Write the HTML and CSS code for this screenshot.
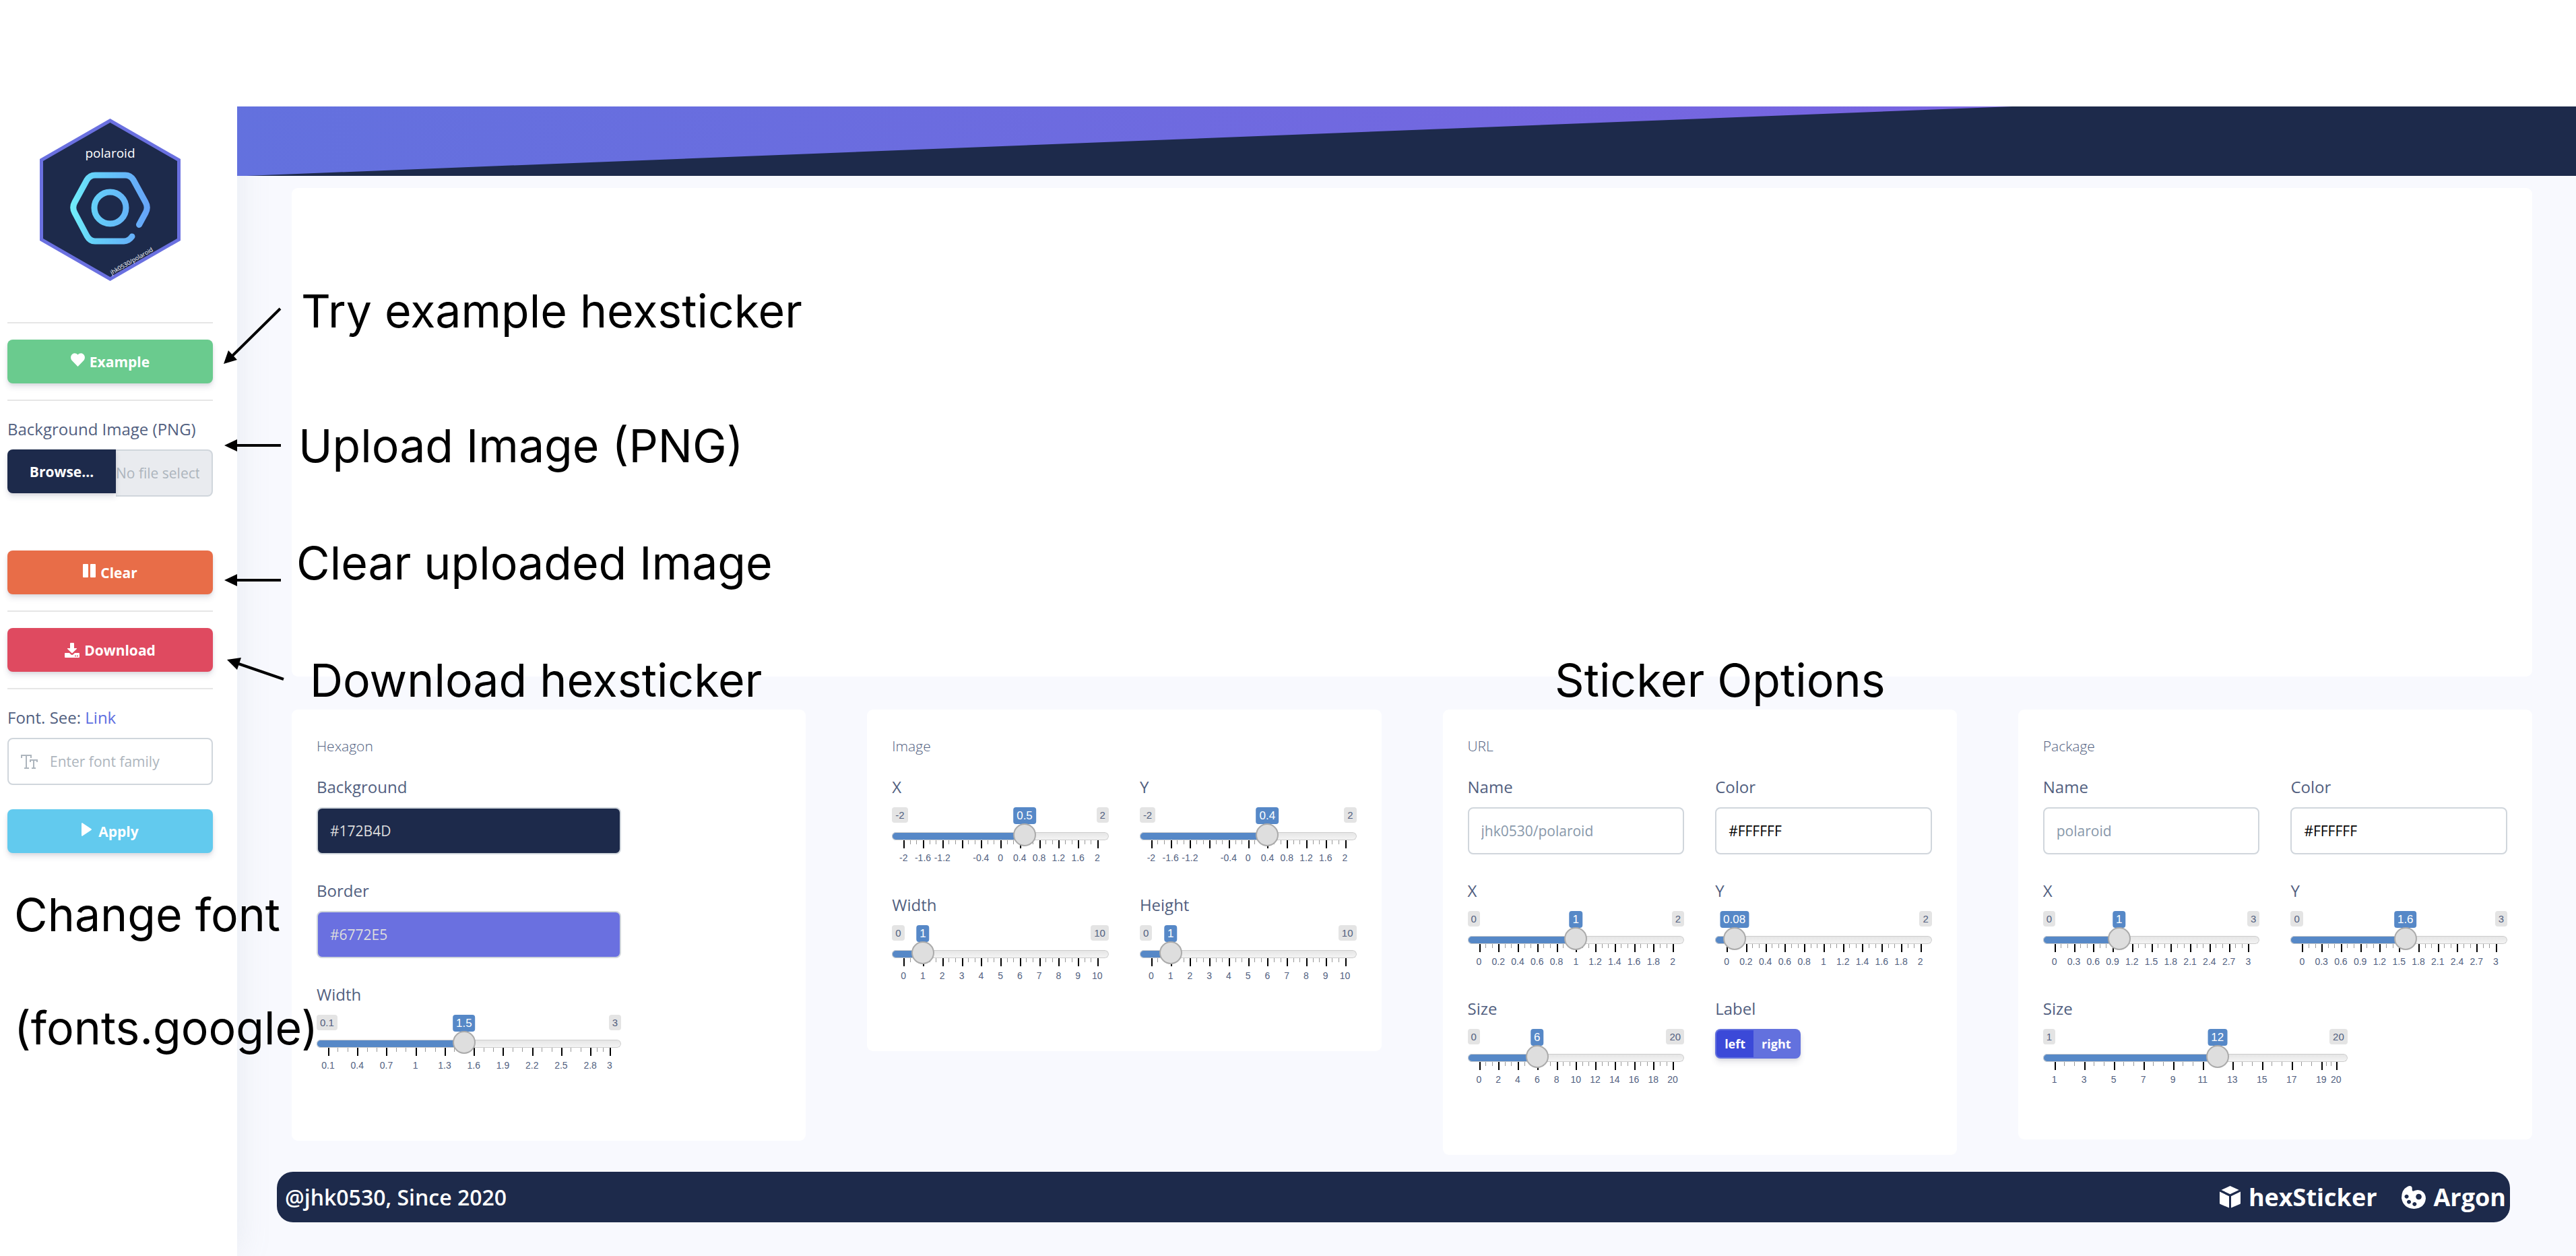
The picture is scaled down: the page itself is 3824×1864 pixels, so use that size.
FILE: index.html
```html
<!DOCTYPE html>
<html lang="en">
<head>
<meta charset="utf-8">
<meta name="viewport" content="width=device-width, initial-scale=1">
<title>polaroid – hexSticker builder</title>
<link rel="stylesheet" href="styles.css">
</head>
<body>
<div class="app">
  <aside class="sidebar">
    <svg class="logo" viewBox="0 0 209 241" role="img" aria-label="polaroid">
      <defs>
        <linearGradient id="ring" gradientUnits="userSpaceOnUse" x1="45" y1="0" x2="164" y2="0">
          <stop offset="0" stop-color="#72f0fb"/><stop offset=".3" stop-color="#64cff8"/><stop offset="1" stop-color="#66a3f9"/>
        </linearGradient>
      </defs>
      <path d="M104.500 3L206.500 61.500V179.500L104.500 238L2.500 179.500V61.500Z" fill="#1d2a4b" stroke="#6a70e0" stroke-width="5"/>
      <g fill="none" stroke="url(#ring)" stroke-width="9" stroke-linecap="round" stroke-linejoin="round">
        <path d="M147.500 157.500L157 140Q161.500 132 157 124L139 91Q134.500 84 127 84H82Q74.500 84 70 91L52 124Q47.500 132 52 140L70 174Q74.500 182 82 182H125Q132 182 137 175"/>
        <circle cx="104.500" cy="132.500" r="23.500"/>
      </g>
      <text x="104.500" y="58" text-anchor="middle" class="logo-name">polaroid</text>
      <text transform="translate(107 232) rotate(-30)" class="logo-url">jhk0530/polaroid</text>
    </svg>
    <hr>
    <button class="btn btn-green" type="button">
      <svg class="icon" viewBox="0 0 21 20"><path d="M10.500 20L2 11.200C-.8 8.300-.4 3.600 2.500 1.400C5.100-.6 8.300.1 10.500 2.500C12.700.1 15.900-.6 18.500 1.400C21.400 3.600 21.800 8.300 19 11.200Z"/></svg>
      Example</button>
    <hr>
    <label class="field-label" for="upload">Background Image (PNG)</label>
    <div class="file">
      <label class="btn browse">Browse...<input class="hidden-input" id="upload" type="file" accept="image/png"></label>
      <input class="file-name" type="text" placeholder="No file selected" aria-label="Chosen file" readonly>
    </div>
    <button class="btn btn-orange" type="button">
      <svg class="icon" viewBox="0 0 19 20"><rect width="8" height="20" rx="1"/><rect x="11" width="8" height="20" rx="1"/></svg>
      Clear</button>
    <hr>
    <button class="btn btn-red" type="button">
      <svg class="icon icon-low" viewBox="0 0 22 22"><path d="M9 0h4q1 0 1 1v7h3.500q1.200 0 .4 1l-6.200 6q-.7.6-1.400 0l-6.200-6q-.8-1 .4-1H8V1q0-1 1-1zM1 15h6l2.300 2.200q1.700 1.500 3.400 0L15 15h6q1 0 1 1v5q0 1-1 1H1q-1 0-1-1v-5q0-1 1-1z"/><circle cx="16" cy="19.500" r="1" fill="#df4a60"/><circle cx="19" cy="19.500" r="1" fill="#df4a60"/></svg>
      Download</button>
    <hr>
    <label class="field-label" for="font">Font. See: <a href="#fonts">Link</a></label>
    <div class="font-box">
      <svg class="font-icon" viewBox="0 0 25 21" aria-hidden="true"><path d="M1 5V1h14v4M8 1v19M5 20h7M14 11V8h10v3M19 8v12M16 20h6"/></svg>
      <input id="font" type="text" placeholder="Enter font family">
    </div>
    <button class="btn btn-cyan" type="button">
      <svg class="icon icon-play" viewBox="0 0 15 20"><path d="M0 1.200Q.2-.4 1.600.4L14.300 9Q15.600 10 14.300 11L1.600 19.600Q.2 20.400 0 18.800Z"/></svg>
      Apply</button>
  </aside>

  <main class="main">
    <svg class="banner" viewBox="0 0 1000 100" preserveAspectRatio="none" aria-hidden="true">
      <path d="M4 100L759 0H1000V100Z"/>
    </svg>
    <section class="preview" aria-label="Preview"></section>

    <div class="cards">
      <section class="card">
        <h2>Hexagon</h2>
        <div class="field narrow"><label class="field-label" for="hex-bg">Background</label><input class="text navy" id="hex-bg" type="text" value="#172B4D"></div>
        <div class="field narrow"><label class="field-label" for="hex-border">Border</label><input class="text violet" id="hex-border" type="text" value="#6772E5"></div>
        <div class="field narrow"><label class="field-label" for="hex-width">Width</label><input type="range" id="hex-width" min="0.1" max="3" step="0.1" value="1.5" data-ticks="0.1 0.4 0.7 1 1.3 1.6 1.9 2.2 2.5 2.8 3"></div>
      </section>

      <section class="card">
        <h2>Image</h2>
        <div class="pair">
          <div class="field"><label class="field-label" for="img-x">X</label><input type="range" id="img-x" min="-2" max="2" step="0.1" value="0.5" data-ticks="-2 -1.6 -1.2 -0.8 -0.4 0 0.4 0.8 1.2 1.6 2" data-mute="-0.8"></div>
          <div class="field"><label class="field-label" for="img-y">Y</label><input type="range" id="img-y" min="-2" max="2" step="0.1" value="0.4" data-ticks="-2 -1.6 -1.2 -0.8 -0.4 0 0.4 0.8 1.2 1.6 2" data-mute="-0.8"></div>
          <div class="field"><label class="field-label" for="img-w">Width</label><input type="range" id="img-w" min="0" max="10" step="0.1" value="1" data-ticks="0 1 2 3 4 5 6 7 8 9 10"></div>
          <div class="field"><label class="field-label" for="img-h">Height</label><input type="range" id="img-h" min="0" max="10" step="0.1" value="1" data-ticks="0 1 2 3 4 5 6 7 8 9 10"></div>
        </div>
      </section>

      <section class="card">
        <h2>URL</h2>
        <div class="pair">
          <div class="field"><label class="field-label" for="url-name">Name</label><input class="text" id="url-name" type="text" value="jhk0530/polaroid"></div>
          <div class="field"><label class="field-label" for="url-color">Color</label><input class="text black" id="url-color" type="text" value="#FFFFFF"></div>
          <div class="field"><label class="field-label" for="url-x">X</label><input type="range" id="url-x" min="0" max="2" step="0.01" value="1" data-ticks="0 0.2 0.4 0.6 0.8 1 1.2 1.4 1.6 1.8 2"></div>
          <div class="field"><label class="field-label" for="url-y">Y</label><input type="range" id="url-y" min="0" max="2" step="0.01" value="0.08" data-ticks="0 0.2 0.4 0.6 0.8 1 1.2 1.4 1.6 1.8 2"></div>
          <div class="field"><label class="field-label" for="url-size">Size</label><input type="range" id="url-size" min="0" max="20" step="1" value="6" data-ticks="0 2 4 6 8 10 12 14 16 18 20"></div>
          <div class="field" role="radiogroup" aria-labelledby="url-label">
            <span class="field-label" id="url-label">Label</span>
            <div class="toggle">
              <label><input class="hidden-input" type="radio" name="side" checked><span>left</span></label>
              <label><input class="hidden-input" type="radio" name="side"><span>right</span></label>
            </div>
          </div>
        </div>
      </section>

      <section class="card card-short">
        <h2>Package</h2>
        <div class="pair">
          <div class="field"><label class="field-label" for="pkg-name">Name</label><input class="text" id="pkg-name" type="text" value="polaroid"></div>
          <div class="field"><label class="field-label" for="pkg-color">Color</label><input class="text black" id="pkg-color" type="text" value="#FFFFFF"></div>
          <div class="field"><label class="field-label" for="pkg-x">X</label><input type="range" id="pkg-x" min="0" max="3" step="0.05" value="1" data-ticks="0 0.3 0.6 0.9 1.2 1.5 1.8 2.1 2.4 2.7 3"></div>
          <div class="field"><label class="field-label" for="pkg-y">Y</label><input type="range" id="pkg-y" min="0" max="3" step="0.05" value="1.6" data-ticks="0 0.3 0.6 0.9 1.2 1.5 1.8 2.1 2.4 2.7 3"></div>
        </div>
        <div class="field narrow"><label class="field-label" for="pkg-size">Size</label><input type="range" id="pkg-size" min="1" max="20" step="1" value="12" data-ticks="1 3 5 7 9 11 13 15 17 19 20"></div>
      </section>
    </div>

    <footer class="footer">
      <span class="author">@jhk0530, Since 2020</span>
      <nav class="links">
        <a href="#hexsticker"><svg viewBox="0 0 31 33" width="31" height="33"><path d="M15.500 0L28.700 6L15.500 12.200L2.500 6ZM0 8.500L14 15.300V32.500L1 27Q0 26.500 0 25.500ZM31 8.500L17 15.300V32.500L30 27Q31 26.500 31 25.500Z"/></svg>hexSticker</a>
        <a href="#argon"><svg viewBox="0 0 36 34" width="36" height="34"><path fill-rule="evenodd" d="M8.500 1.200Q14-1.500 15.700 2.500V5Q15.500 8.200 18 7.500Q24 4.500 30 7.500Q36 11.500 36 18.500Q34.500 33 18.500 34Q2.500 33 0 18Q0 5.500 8.500 1.200ZM7.500 12.700a3 3 0 1 0 .1 0ZM25.500 11.700a4.300 4.300 0 1 0 .1 0ZM11 20.700a3 3 0 1 0 .1 0ZM19.300 24a3 3 0 1 0 .1 0Z"/></svg>Argon</a>
      </nav>
    </footer>
  </main>
</div>

<div class="notes">
  <svg class="arrows" width="440" height="1020" viewBox="0 0 440 1020" aria-hidden="true">
    <path class="shaft" d="M416 458L345 528M417 661H350M417 861H350M421 1008L354 985"/>
    <path d="M332 540L339 520L352 534ZM333 661L352 652V670ZM333 861L352 852V870ZM337 979L358 976L352 994Z"/>
  </svg>
  <p class="note note-example">Try example hexsticker</p>
  <p class="note note-upload">Upload Image (PNG)</p>
  <p class="note note-clear">Clear uploaded Image</p>
  <p class="note note-download">Download hexsticker</p>
  <p class="note note-options">Sticker Options</p>
  <p class="note note-font">Change font<br>(fonts.google)</p>
</div>
<script src="sliders.js"></script>
</body>
</html>
```

FILE: styles.css
```css
* { box-sizing: border-box; }

body {
  margin: 0;
  padding-top: 158px;
  position: relative;
  background: #fff;
  color: #525f7f;
  font-family: "Open Sans", "Noto Sans", sans-serif;
  font-size: 24px;
  line-height: 36px;
}

a { color: #5e6ee0; text-decoration: none; }
input, button { font-family: inherit; }

.hidden-input {
  position: absolute;
  width: 1px;
  height: 1px;
  opacity: 0;
}

.app { display: flex; min-height: calc(100vh - 158px); }

/* Sidebar */
.sidebar {
  flex: 0 0 352px;
  min-width: 0;
  display: flex;
  flex-direction: column;
  padding: 18px 36px 24px 11px;
  background: #fff;
  box-shadow: 0 0 48px rgba(136, 152, 170, .15);
  clip-path: inset(0 -96px 0 0);
  position: relative;
}
.sidebar hr {
  width: 100%;
  height: 2px;
  margin: 24px 0;
  border: 0;
  background: #e6e6e6;
}
.logo {
  width: 209px;
  height: 241px;
  align-self: center;
  margin-bottom: 37px;
}
.logo-name { font-size: 19px; fill: #fff; }
.logo-url { font-size: 9px; fill: #fff; }

.btn {
  display: flex;
  align-items: center;
  justify-content: center;
  gap: 7px;
  height: 65px;
  padding: 0 18px;
  border: 0;
  border-radius: 8px;
  color: #fff;
  font-size: 21px;
  font-weight: 700;
  line-height: 32px;
  box-shadow: 0 6px 9px rgba(50, 50, 93, .11), 0 2px 4px rgba(0, 0, 0, .08);
}
.btn-green { background: #6acb8e; }
.btn-orange { background: #e86d48; }
.btn-red { background: #df4a60; }
.btn-cyan { background: #62caee; }
.icon { height: 20px; fill: currentColor; margin-bottom: 6px; }
.icon-low { height: 22px; margin-bottom: 0; }
.icon-play { margin-right: 3px; }

.field-label { display: block; margin-bottom: 12px; }

.file { display: flex; height: 70px; margin-bottom: 80px; }
.browse {
  flex: 0 0 161px;
  border-radius: 8px 0 0 8px;
  background: #1d2a4b;
  position: relative;
}
.file-name {
  flex: 1;
  min-width: 0;
  padding: 0 18px 0 0;
  border: 2px solid #d0d6dc;
  border-left: 0;
  border-radius: 0 8px 8px 0;
  background: #e9ebef;
  font-size: 21px;
}
input::placeholder { color: #adb5bd; opacity: 1; }

.font-box {
  display: flex;
  align-items: center;
  height: 70px;
  margin-bottom: 36px;
  padding: 0 18px;
  gap: 18px;
  border: 2px solid #d0d6dc;
  border-radius: 8px;
}
.font-box input {
  flex: 1;
  min-width: 0;
  padding: 0;
  border: 0;
  background: none;
  font-size: 21px;
}
.font-icon { width: 25px; height: 21px; fill: none; stroke: #adb5bd; stroke-width: 2; }

/* Main column */
.main { flex: 1; min-width: 0; background: #f8f9fe; }
.banner {
  display: block;
  width: 100%;
  height: 103px;
  background: linear-gradient(87deg, #6371de, #7f60e2);
  fill: #1d2a4b;
  position: relative;
}
.preview {
  min-height: 725px;
  margin: 18px 65px 49px 81px;
  border-radius: 9px;
  background: #fff;
  position: relative;
}
.cards {
  display: grid;
  grid-template-columns: repeat(4, minmax(0, 1fr));
  gap: 91px;
  align-items: start;
  margin: 0 65px 25px 81px;
}
.card {
  padding: 36px 37px 60px;
  border-radius: 9px;
  background: #fff;
  position: relative;
}
.card-short { padding-bottom: 37px; }
.card h2 {
  margin: 0 0 25px;
  font-size: 21px;
  font-weight: 300;
  line-height: 36px;
}
.pair {
  display: grid;
  grid-template-columns: repeat(2, minmax(0, 1fr));
  column-gap: 46px;
}
.field { margin-bottom: 36px; }
.narrow { max-width: 452px; }

.text {
  display: block;
  width: 100%;
  height: 70px;
  padding: 0 18px;
  border: 2px solid #d0d6dc;
  border-radius: 8px;
  background: #fff;
  color: #8898aa;
  font-size: 21px;
}
.text.navy { background: #1d2a4b; color: #ddd; }
.text.violet { background: #6a70e0; color: #ddd; }
.text.black { color: #000; }

/* Range slider with tags above and a scale below */
.slider {
  position: relative;
  height: 91px;
  font-family: "Liberation Sans", Arial, sans-serif;
}
.slider input {
  appearance: none;
  display: block;
  width: 100%;
  height: 12px;
  margin: 0;
  position: relative;
  top: 37px;
  z-index: 1;
  background: none;
}
.slider input::-webkit-slider-runnable-track {
  height: 12px;
  border-radius: 6px;
  box-shadow: inset 0 0 0 1px #ccc;
  background:
    linear-gradient(#5688c7, #5688c7) 0 0 / calc(17px + (100% - 34px) * var(--at)) 100% no-repeat,
    linear-gradient(#e4e4e4, #f5f5f5);
}
.slider input::-webkit-slider-thumb {
  appearance: none;
  width: 34px;
  height: 34px;
  margin-top: -13px;
  border: 2px solid #ababab;
  border-radius: 50%;
  background: #dedede;
}
.tag {
  position: absolute;
  top: 0;
  padding: 0 5px;
  border-radius: 4px;
  background: #e4e4e4;
  font-size: 15px;
  line-height: 23px;
}
.tag-min { left: 0; }
.tag-max { right: 0; }
.tag-now {
  left: calc(17px + (100% - 34px) * var(--at));
  transform: translateX(-50%);
  background: #5688c7;
  color: #fff;
  font-size: 17px;
  line-height: 25px;
}
.scale { position: absolute; left: 17px; right: 17px; top: 49px; }
.tick {
  position: absolute;
  left: calc(100% * var(--at));
  width: 1px;
  height: 6px;
  background: #999;
}
.tick.major { width: 2px; height: 12px; background: #000; }
.tick-text {
  position: absolute;
  left: calc(100% * var(--at));
  top: 17px;
  transform: translateX(-50%);
  font-size: 14px;
  line-height: 18px;
}

.toggle {
  display: inline-flex;
  padding: 2px;
  border-radius: 8px;
  background: #6371de;
  box-shadow: 0 6px 9px rgba(50, 50, 93, .11), 0 2px 4px rgba(0, 0, 0, .08);
  color: #fff;
  font-size: 18px;
  font-weight: 700;
}
.toggle label { position: relative; }
.toggle span { display: block; padding: 0 12px; line-height: 40px; border-radius: 6px 0 0 6px; }
.toggle input:checked + span { background: #3b49d8; }

/* Footer */
.footer {
  display: flex;
  align-items: center;
  justify-content: space-between;
  height: 75px;
  margin: 0 98px 50px 59px;
  padding: 0 6px 0 12px;
  border-radius: 24px;
  background: #1d2a4b;
  color: #fff;
  position: relative;
}
.author { font-size: 32px; font-weight: 600; }
.links { display: flex; gap: 36px; }
.links a {
  display: flex;
  align-items: center;
  gap: 12px;
  color: #fff;
  font-size: 36px;
  font-weight: 700;
}
.links svg { fill: currentColor; }

/* Callouts laid over the page */
.notes { position: absolute; top: 0; left: 0; pointer-events: none; color: #000; }
.arrows { display: block; z-index: 2; position: relative; }
.arrows .shaft { stroke: #000; stroke-width: 4; fill: none; }
.note {
  position: absolute;
  z-index: 2;
  margin: 0;
  font-family: Inter, sans-serif;
  font-size: 68px;
  line-height: 168px;
  white-space: nowrap;
}
.note-example { left: 447px; top: 377px; }
.note-upload { left: 443px; top: 577px; }
.note-clear { left: 440px; top: 751px; }
.note-download { left: 460px; top: 925px; }
.note-options { left: 2308px; top: 925px; }
.note-font { left: 21px; top: 1273px; }
```

FILE: sliders.js
```js
// Wraps every range input with its min / max / value tags and a tick scale.
document.querySelectorAll('input[type="range"]').forEach(function (input) {
  var min = Number(input.min), max = Number(input.max);
  var muted = (input.dataset.mute || '').split(' ');
  var at = function (v) { return (v - min) / (max - min); };
  var box = document.createElement('div');
  box.className = 'slider';
  input.before(box);
  box.append(input);

  var add = function (parent, cls, text, pos) {
    var el = document.createElement('span');
    el.className = cls;
    el.textContent = text;
    if (pos !== undefined) el.style.setProperty('--at', pos);
    parent.append(el);
    return el;
  };

  var low = add(box, 'tag tag-min', input.min);
  add(box, 'tag tag-max', input.max);
  var now = add(box, 'tag tag-now', input.value);

  var scale = document.createElement('div');
  scale.className = 'scale';
  box.append(scale);
  var ticks = input.dataset.ticks.split(' ');
  ticks.forEach(function (t, i) {
    var p = at(Number(t));
    add(scale, 'tick major', '', p);
    if (!muted.includes(t)) add(scale, 'tick-text', t, p);
    if (i + 1 < ticks.length) {
      var step = (at(Number(ticks[i + 1])) - p) / 3;
      add(scale, 'tick', '', p + step);
      add(scale, 'tick', '', p + 2 * step);
    }
  });

  var update = function () {
    now.textContent = input.value;
    box.style.setProperty('--at', at(Number(input.value)));
    var clash = now.getBoundingClientRect().left < low.getBoundingClientRect().right;
    low.style.visibility = clash ? 'hidden' : 'visible';
  };
  input.addEventListener('input', update);
  update();
});
```
